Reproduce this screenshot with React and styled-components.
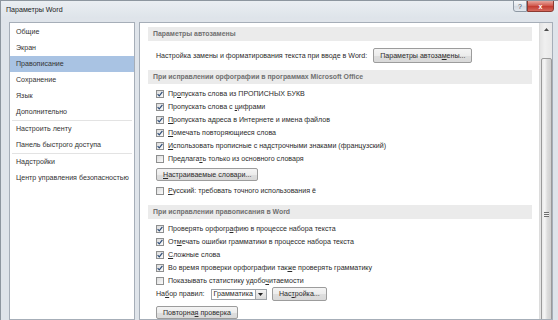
import React from 'react';
import styled, { createGlobalStyle } from 'styled-components';

const Global = createGlobalStyle`
  html, body { margin: 0; padding: 0; }
  body {
    width: 558px; height: 320px; overflow: hidden; background: #dfe4ea;
    font-family: "Liberation Sans", Arial, sans-serif;
  }
`;

const FS = '7.1px';

const Window = styled.div`
  width: 558px; height: 320px; box-sizing: border-box;
  display: flex; flex-direction: column; overflow: hidden;
  background: #dfe4ea;
  border-left: 1px solid #8d969f; border-top: 1px solid #8d969f;
`;

const TitleBar = styled.div`
  height: 17px; flex: none;
  display: flex; justify-content: space-between; align-items: flex-start;
  background: linear-gradient(#eaeef2, #dee4ea);
`;

const Title = styled.span`
  font-size: ${FS}; color: #1c1c1c; margin: 5px 0 0 5px;
`;

const Controls = styled.div`
  display: flex; margin-right: 4px; margin-top: -1px;
`;

const CtlBtn = styled.div`
  height: 12px; box-sizing: border-box;
  display: flex; align-items: center; justify-content: center;
  font-size: 7px; line-height: 1;
  width: ${p => (p.$close ? '27px' : '14px')};
  border: 1px solid ${p => (p.$close ? '#8c3a31' : '#8e98a3')};
  border-radius: ${p => (p.$close ? '0 0 3px 0' : '0 0 0 3px')};
  color: ${p => (p.$close ? '#ffffff' : '#4a5564')};
  font-weight: ${p => (p.$close ? 700 : 400)};
  background: ${p => (p.$close
    ? 'linear-gradient(#e7a69d, #cf5448 50%, #c23a2f 51%, #d56a5d)'
    : 'linear-gradient(#f6f8fa, #dfe4ea 50%, #d3d9e0 51%, #e3e8ee)')};
`;

const Body = styled.div`
  flex: 1; min-height: 0;
  display: flex; gap: 4px;
  padding: 4px 5px 0 8px;
`;

const Nav = styled.div`
  width: 126px; flex: none; box-sizing: border-box;
  background: #ffffff; border: 1px solid #a6aeb8;
  padding-top: 1px;
  display: flex; flex-direction: column;
`;

const NavItem = styled.div`
  height: 16px; line-height: 16px; padding-left: 6px;
  font-size: ${FS}; color: #333333; white-space: nowrap;
  background: ${p => (p.$active ? '#a9c3e3' : 'transparent')};
`;

const NavSep = styled.div`
  height: 1px; margin: 0 2px; background: #e3e3e3;
`;

const Content = styled.div`
  flex: 1; box-sizing: border-box;
  background: #ffffff; border: 1px solid #a6aeb8;
  display: flex; overflow: hidden;
`;

const Scroller = styled.div`
  flex: 1; padding: 4px 7px 0 8px;
  display: flex; flex-direction: column;
`;

const SectionBar = styled.div`
  height: 14px; line-height: 14px; flex: none;
  background: #ebebeb; padding-left: 5px;
  font-size: 6.9px; font-weight: 700; color: #707070; white-space: nowrap;
  margin-top: ${p => p.$mt || 0}px;
`;

const Row = styled.div`
  display: flex; align-items: center; gap: ${p => p.$gap || 4}px; flex: none;
  height: ${p => p.$h || 13}px; padding-left: 8px;
  margin-top: ${p => p.$mt || 0}px;
  font-size: ${FS}; color: #2b2b2b; white-space: nowrap;
`;

const Box = styled.span`
  width: 8px; height: 8px; box-sizing: border-box; flex: none;
  border: 1px solid #8e8f8f;
  background: linear-gradient(135deg, #dcdcdc, #fbfbfb);
  display: flex; align-items: center; justify-content: center;
`;

const Label = styled.span`
  color: #2b2b2b;
`;

const U = styled.span`
  text-decoration: underline;
  text-underline-offset: 1px;
`;

const Button = styled.div`
  height: ${p => p.$h || 14}px; box-sizing: border-box;
  padding: 0 ${p => p.$px || 6}px;
  display: inline-flex; align-items: center;
  border: 1px solid #9c9c9c; border-radius: 2px;
  background: linear-gradient(#f4f4f4, #ececec 50%, #dedede 51%, #d9d9d9);
  font-size: ${FS}; color: #2b2b2b; white-space: nowrap; flex: none;
`;

const Select = styled.div`
  display: flex; height: 11px; box-sizing: border-box; flex: none;
  border: 1px solid #9ea3a8; background: #ffffff; margin-left: 1px;
`;

const SelectText = styled.span`
  padding: 0 2px; font-size: ${FS}; line-height: 9px; color: #2b2b2b;
  white-space: nowrap;
`;

const SelectArrow = styled.span`
  width: 10px; border-left: 1px solid #9ea3a8;
  background: linear-gradient(#f3f3f3, #d9d9d9);
  display: flex; align-items: center; justify-content: center;
`;

const ButtonWrap = styled.div`
  padding-left: 8px; margin-top: ${p => p.$mt || 0}px; display: flex; flex: none;
`;

const Scrollbar = styled.div`
  width: 13px; flex: none; box-sizing: border-box;
  border-left: 1px solid #dcdcdc;
  background: linear-gradient(90deg, #e4e4e4, #f0f0f0 40%, #e8e8e8);
  display: flex; flex-direction: column; align-items: center;
`;

const ArrowBtn = styled.div`
  height: 13px; width: 100%; flex: none;
  display: flex; align-items: center; justify-content: center;
`;

const Thumb = styled.div`
  width: 11px; height: 312px; margin-top: 22px; box-sizing: border-box; flex: none;
  border: 1px solid #9a9a9a; border-radius: 2px;
  background: linear-gradient(90deg, #e9e9e9, #f5f5f5 30%, #dcdcdc 60%, #cfcfcf);
  display: flex; align-items: center; justify-content: center;
`;

const Grip = styled.div`
  width: 5px; height: 5px;
  background: repeating-linear-gradient(#6f6f6f 0 1px, #f0f0f0 1px 2px);
`;

const Check = () => (
  <svg width="6" height="6" viewBox="0 0 6 6">
    <path d="M0.6 3.1 L2.3 4.8 L5.4 0.9" fill="none" stroke="#2f4d78" strokeWidth="1.2" />
  </svg>
);

const CheckRow = ({ checked, children, mt }) => (
  <Row $mt={mt}>
    <Box>{checked && <Check />}</Box>
    <Label>{children}</Label>
  </Row>
);

const navItems = [
  ['Общие'], ['Экран'], ['Правописание', true], ['Сохранение'], ['Язык'], ['Дополнительно'],
  'sep', ['Настроить ленту'], ['Панель быстрого доступа'], 'sep', ['Надстройки'],
  ['Центр управления безопасностью'],
];

export default function App() {
  return (
    <>
      <Global />
      <Window>
        <TitleBar>
          <Title>Параметры Word</Title>
          <Controls>
            <CtlBtn>?</CtlBtn>
            <CtlBtn $close>x</CtlBtn>
          </Controls>
        </TitleBar>
        <Body>
          <Nav>
            {navItems.map((it, i) =>
              it === 'sep' ? <NavSep key={i} /> : <NavItem key={i} $active={it[1]}>{it[0]}</NavItem>
            )}
          </Nav>
          <Content>
            <Scroller>
              <SectionBar>Параметры автозамены</SectionBar>
              <Row $h={15} $gap={6} $mt={7}>
                <Label>Настройка замены и форматирования текста при вводе в Word:</Label>
                <Button $h={15}><span>Параметры автоза<U>м</U>ены...</span></Button>
              </Row>
              <SectionBar $mt={7}>При исправлении орфографии в программах Microsoft Office</SectionBar>
              <CheckRow checked mt={3}>Пр<U>о</U>пускать слова из ПРОПИСНЫХ БУКВ</CheckRow>
              <CheckRow checked>Пропускать слова с <U>ц</U>ифрами</CheckRow>
              <CheckRow checked><U>П</U>ропускать адреса в Интернете и имена файлов</CheckRow>
              <CheckRow checked><U>П</U>омечать повторяющиеся слова</CheckRow>
              <CheckRow checked><U>И</U>спользовать прописные с надстрочными знаками (французский)</CheckRow>
              <CheckRow>Предлага<U>т</U>ь только из основного словаря</CheckRow>
              <ButtonWrap $mt={3}>
                <Button $h={13}><span><U>Н</U>астраиваемые словари...</span></Button>
              </ButtonWrap>
              <CheckRow mt={3}><U>Р</U>усский: требовать точного использования ё</CheckRow>
              <SectionBar $mt={8}>При исправлении правописания в Word</SectionBar>
              <CheckRow checked mt={3}>Проверять орфогр<U>а</U>фию в процессе набора текста</CheckRow>
              <CheckRow checked>От<U>м</U>ечать ошибки грамматики в процессе набора текста</CheckRow>
              <CheckRow checked><U>С</U>ложные слова</CheckRow>
              <CheckRow checked>Во время проверки орфографии так<U>ж</U>е проверять грамматику</CheckRow>
              <CheckRow>Показывать статистику удобо<U>ч</U>итаемости</CheckRow>
              <Row $h={14} $gap={5}>
                <Label>На<U>б</U>ор правил:</Label>
                <Select>
                  <SelectText>Грамматика</SelectText>
                  <SelectArrow>
                    <svg width="5" height="3" viewBox="0 0 5 3"><path d="M0 0 H5 L2.5 3 Z" fill="#222" /></svg>
                  </SelectArrow>
                </Select>
                <Button $h={14}><span>Нас<U>т</U>ройка...</span></Button>
              </Row>
              <ButtonWrap $mt={5}>
                <Button $h={13}><span>Повторна<U>я</U> проверка</span></Button>
              </ButtonWrap>
            </Scroller>
            <Scrollbar>
              <ArrowBtn>
                <svg width="5" height="3" viewBox="0 0 5 3"><path d="M0 3 H5 L2.5 0 Z" fill="#4d4d4d" /></svg>
              </ArrowBtn>
              <Thumb><Grip /></Thumb>
            </Scrollbar>
          </Content>
        </Body>
      </Window>
    </>
  );
}
